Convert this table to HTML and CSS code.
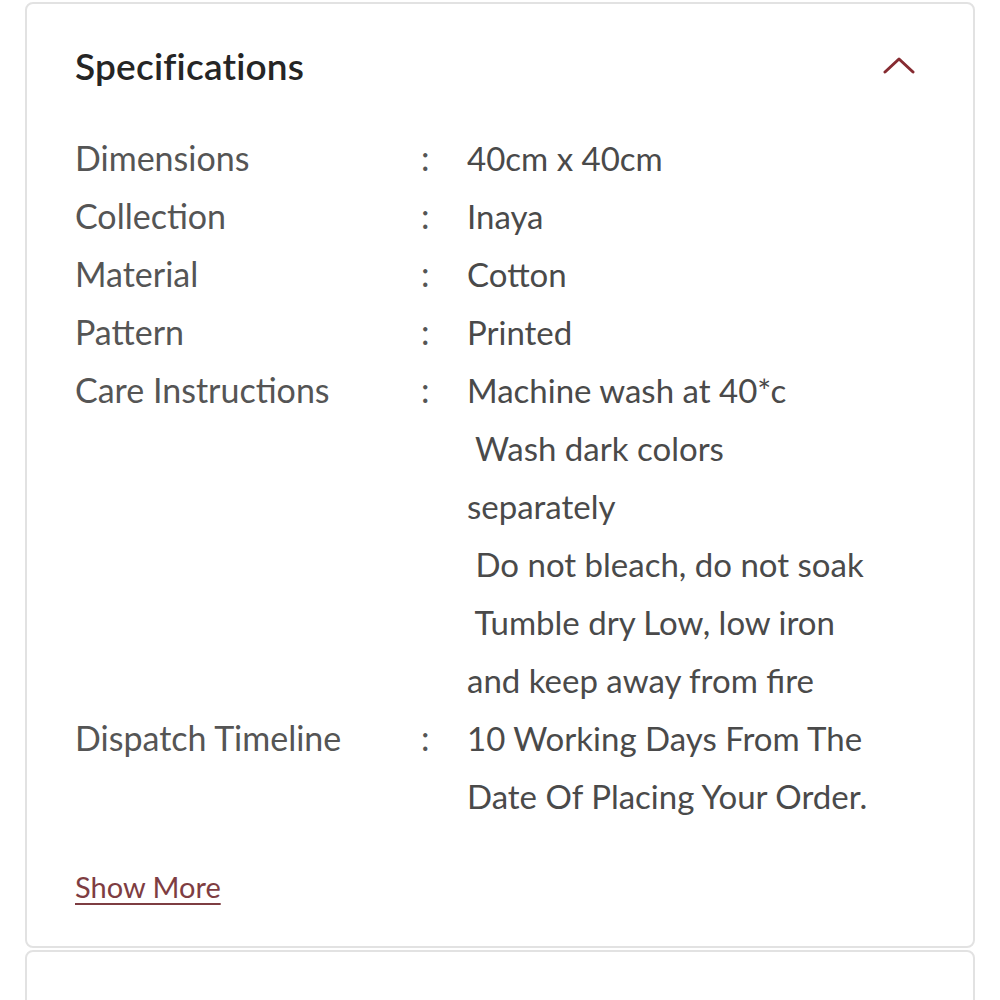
FILE: index.html
```html
<!DOCTYPE html>
<html lang="en">
<head>
    <meta charset="UTF-8">
    <meta name="viewport" content="width=device-width, initial-scale=1.0">
    <title>Specifications</title>
    <link rel="stylesheet" href="styles.css">
</head>
<body>
    <div class="accordion">
        <div class="card">
            <div class="card-header">
                <h2 class="card-title">Specifications</h2>
                <svg class="chevron" width="32" height="18" viewBox="0 0 32 18">
                    <polyline points="2,16 16,3 30,16" fill="none" stroke="#862b31" stroke-width="3" stroke-linecap="round" stroke-linejoin="round"/>
                </svg>
            </div>

            <div class="spec-list">
                <div class="spec-label">Dimensions</div>
                <div class="spec-colon">:</div>
                <div class="spec-value">40cm x 40cm</div>

                <div class="spec-label">Collection</div>
                <div class="spec-colon">:</div>
                <div class="spec-value">Inaya</div>

                <div class="spec-label">Material</div>
                <div class="spec-colon">:</div>
                <div class="spec-value">Cotton</div>

                <div class="spec-label">Pattern</div>
                <div class="spec-colon">:</div>
                <div class="spec-value">Printed</div>

                <div class="spec-label">Care Instructions</div>
                <div class="spec-colon">:</div>
                <div class="spec-value">Machine wash at 40*c<br>&nbsp;Wash dark colors<br>separately<br>&nbsp;Do not bleach, do not soak<br>&nbsp;Tumble dry Low, low iron<br>and keep away from fire</div>

                <div class="spec-label">Dispatch Timeline</div>
                <div class="spec-colon">:</div>
                <div class="spec-value">10 Working Days From The<br>Date Of Placing Your Order.</div>
            </div>

            <a class="show-more" href="#">Show More</a>
        </div>

        <div class="card card-next"></div>
    </div>
</body>
</html>
```

FILE: styles.css
```css
body {
    margin: 0;
    background: #ffffff;
    font-family: Lato, "Open Sans", sans-serif;
    color: #4a4a4a;
}

.accordion {
    padding: 2px 25px 0;
    display: flex;
    flex-direction: column;
    gap: 2px;
}

.card {
    border: 2px solid #e2e2e2;
    border-radius: 8px;
    background: #fff;
    padding: 39px 50px 39px 48px;
}

.card-next {
    height: 60px;
    padding: 0;
}

.card-header {
    display: flex;
    justify-content: space-between;
    align-items: center;
    height: 44px;
}

.card-title {
    margin: 0;
    font-size: 37px;
    font-weight: 600;
    color: #252525;
    letter-spacing: 0.2px;
}

.chevron {
    margin-right: 8px;
}

.spec-list {
    display: grid;
    grid-template-columns: 346px 46px 1fr;
    margin-top: 42px;
    font-size: 34px;
    line-height: 58px;
}

.spec-label {
    color: #555;
}

.spec-colon {
    color: #555;
}

.spec-value {
    color: #4a4a4a;
    font-size: 33px;
}

.show-more {
    display: inline-block;
    margin-top: 42px;
    font-size: 29px;
    line-height: 40px;
    color: #7e3d42;
    text-decoration: underline;
    text-underline-offset: 5px;
    text-decoration-thickness: 2px;
}
```
